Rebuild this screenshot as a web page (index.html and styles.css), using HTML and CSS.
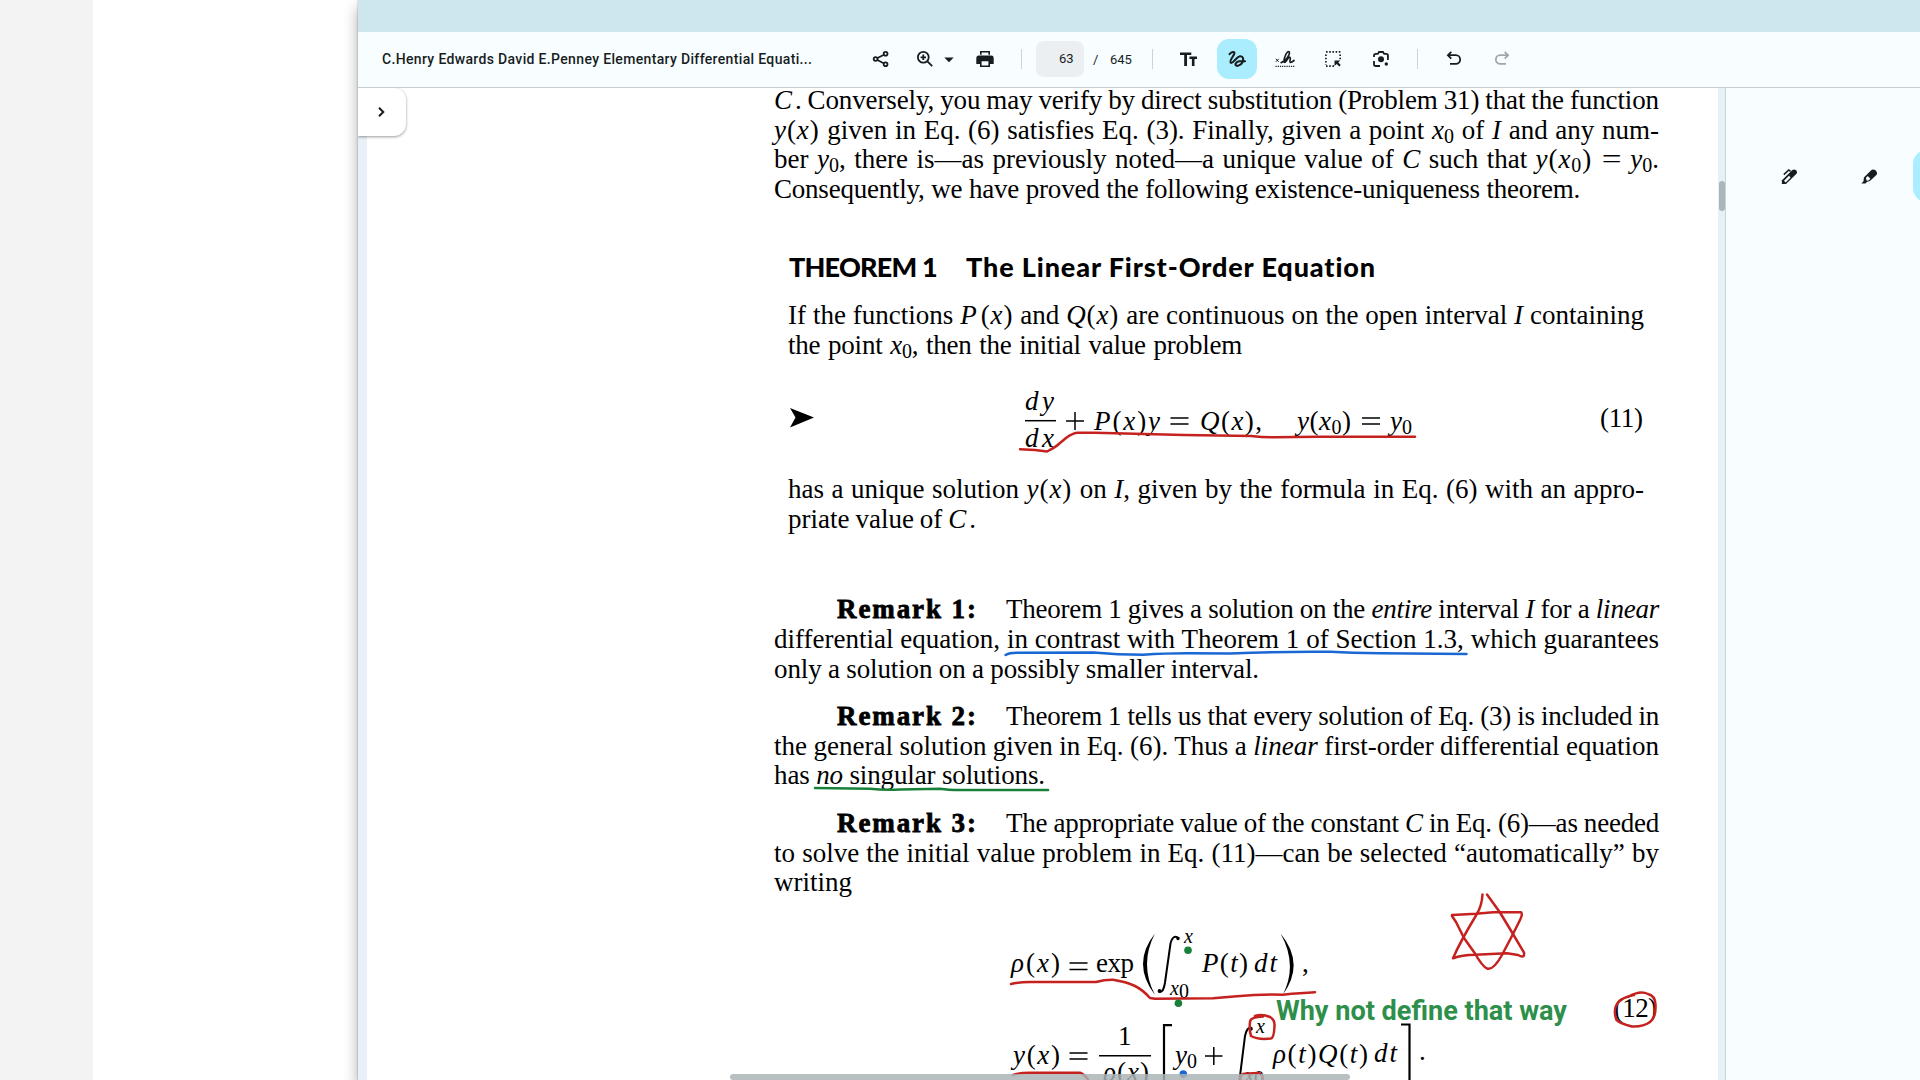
FILE: index.html
```html
<!DOCTYPE html>
<html lang="en">
<head>
<meta charset="utf-8">
<title>PDF viewer</title>
<link rel="stylesheet" href="styles.css">
</head>
<body>
<div class="desk"><div class="sheet"></div></div>
<main class="window">
  <div class="titlebar"></div>
  <header class="toolbar">
    <span class="doc-title">C.Henry Edwards David E.Penney Elementary Differential Equati...</span>
    <svg class="icon share" viewBox="0 0 20 20"><g class="stroke"><path d="M4.5 10 14.5 5M4.5 10l10 5.200"/><circle class="hollow" cx="4.600" cy="10" r="1.900"/><circle class="hollow" cx="14.600" cy="4.700" r="1.900"/><circle class="hollow" cx="14.600" cy="15.200" r="1.900"/></g></svg>
    <svg class="icon zoom" viewBox="0 0 20 20"><g class="stroke"><circle cx="8.300" cy="8.300" r="5.400"/><path d="m12.400 12.400 4.800 4.800M8.300 5.600v5.400M5.600 8.300H11"/></g></svg>
    <svg class="caret" viewBox="0 0 10 6"><path d="M.3.5h9.400L5 5.300z"/></svg>
    <svg class="icon print" viewBox="0 0 20 20"><path d="M5 2h10v3.800H5zM1.300 9a2.500 2.500 0 0 1 2.500-2.400h12.400A2.500 2.500 0 0 1 18.700 9v6H15v3H5v-3H1.300z"/><path class="paper" d="M6.600 3.500h6.800v2.600H6.600zM6.600 12.300h6.800v4.200H6.600z"/></svg>
    <i class="divider d1"></i>
    <span class="page-box">63</span>
    <span class="slash">/</span>
    <span class="total">645</span>
    <i class="divider d2"></i>
    <svg class="icon text-tool" viewBox="0 0 20 20"><path d="M1 3.400h11.300v2.700H8V17H5.200V6.100H1zM10.500 7.600H18v2.500h-2.500V17h-2.600v-6.900h-2.400z"/></svg>
    <span class="active-tool"><svg class="icon" viewBox="0 0 20 20"><path class="ink-icon" d="M2.500 5.200C4.500 2.800 8.500 1.800 7.200 5 6 7.900 2 12 3.800 13.800 5.500 15.300 9.500 7.700 13 7.200c3.300-.4 3.900 3.500 2.500 6-1.300 2.400-4.700 4.500-6.400 3.300-1.600-1.300.3-3.700 3-4.200 2.300-.4 4.300.1 5.900 0"/></svg></span>
    <svg class="icon sign" viewBox="0 0 20 20"><path class="thin" d="m.8 9.800 3 3m0-3-3 3"/><path class="ink-icon slim" d="M6.200 13.600C10.500 12.500 15.500 5 14.200 2.900 12 .9 8.200 10.400 9.200 13c1.300 1.700 3.700-5 5.600-4.800 1.700.6-.9 4.400.5 5.200 1.100.3 2.200-.6 3.700-1.900"/><path class="dots" d="M.5 17.300h19"/></svg>
    <svg class="icon select" viewBox="0 0 20 20"><path class="dash" d="M3 2.900h14.500M3 17.200h8M2.900 5.500v10M17.100 5.500v5"/><path d="M11.500 11.500h5.700l-1.900 1.900 2.500 2.600-1.500 1.500-2.600-2.500-2.200 1.900z"/></svg>
    <svg class="icon lens" viewBox="0 0 20 20"><path class="stroke" d="M3 8V6.700q0-1.800 1.800-1.800h2L8 3h4l1.200 1.900h2q1.800 0 1.800 1.800V8M3 12v3.200q0 1.800 1.800 1.800H9M16.900 7v4"/><circle cx="10" cy="10.300" r="3"/><circle cx="15.300" cy="15" r="1.700"/></svg>
    <i class="divider d3"></i>
    <svg class="icon undo" viewBox="0 0 20 20"><path class="stroke" d="M7.300 2.800 3.900 6.200l3.400 3.400M4.200 6.200h7.600a4.300 4.300 0 0 1 0 8.700H6"/></svg>
    <svg class="icon redo" viewBox="0 0 20 20"><path class="stroke" d="m12.700 2.800 3.400 3.400-3.400 3.400M15.800 6.200H8.200a4.300 4.300 0 0 0 0 8.700H14"/></svg>
  </header>
  <div class="workspace">
    <div class="viewer">
      <div class="gutter"></div>
      <article class="page">
        <div class="para p1">
          <p class="line snug"><i>C</i><span class="th"></span>. Conversely, you may verify by direct substitution (Problem 31) that the function</p>
          <p class="line"><span class="m"><i>y</i>(<i>x</i>)</span> given in Eq. (6) satisfies Eq. (3). Finally, given a point <i>x</i><sub>0</sub> of <i>I</i> and any num-</p>
          <p class="line">ber <i>y</i><sub>0</sub>, there is—as previously noted—a unique value of <i>C</i> such that <span class="m"><i>y</i>(<i>x</i><sub>0</sub>)</span> <span class="eq">=</span> <i>y</i><sub>0</sub>.</p>
          <p class="line tight w806">Consequently, we have proved the following existence-uniqueness theorem.</p>
        </div>
        <div class="theorem">
          <h2><span class="th-no">THEOREM 1</span><span class="th-name">The Linear First-Order Equation</span></h2>
          <p class="line">If the functions <span class="m"><i>P</i><span class="th"></span>(<i>x</i>)</span> and <span class="m"><i>Q</i>(<i>x</i>)</span> are continuous on the open interval <i>I</i> containing</p>
          <p class="line tight w453">the point <i>x</i><sub>0</sub>, then the initial value problem</p>
          <svg class="equation eq11" viewBox="789 370 860 100">
            <path d="M790 408l24 9.500-24 10 5.500-10z"/>
            <g class="math">
              <text x="1025" y="410" textLength="29">dy</text>
              <path class="rule" d="M1025 420.700h31"/>
              <text x="1025" y="447" textLength="29">dx</text>
              <path class="rule" d="M1066 421h18m-9-9v18M1170.500 418h18m-18 6h18M1362 418h18m-18 6h18"/>
              <text x="1094" y="430" textLength="66">P<tspan class="up">(</tspan>x<tspan class="up">)</tspan>y</text>
              <text x="1200" y="430" textLength="62">Q<tspan class="up">(</tspan>x<tspan class="up">),</tspan></text>
              <text x="1297" y="430" textLength="54">y<tspan class="up">(</tspan>x<tspan class="up low" dy="4">0</tspan><tspan class="up" dy="-4">)</tspan></text>
              <text x="1390" y="430">y<tspan class="up low" dy="4">0</tspan></text>
              <text class="up" x="1600" y="427" textLength="43">(11)</text>
            </g>
          </svg>
          <p class="line">has a unique solution <span class="m"><i>y</i>(<i>x</i>)</span> on <i>I</i>, given by the formula in Eq. (6) with an appro-</p>
          <p class="line w188">priate value of <i>C</i><span class="th"></span>.</p>
        </div>
        <div class="para remark r1">
          <div class="lead"><b>Remark 1:</b><p class="line tight">Theorem 1 gives a solution on the <i>entire</i> interval <i>I</i> for a <i>linear</i></p></div>
          <p class="line">differential equation, in contrast with Theorem 1 of Section 1.3, which guarantees</p>
          <p class="line snug w484">only a solution on a possibly smaller interval.</p>
        </div>
        <div class="para remark">
          <div class="lead"><b>Remark 2:</b><p class="line tight">Theorem 1 tells us that every solution of Eq. (3) is included in</p></div>
          <p class="line">the general solution given in Eq. (6). Thus a <i>linear</i> first-order differential equation</p>
          <p class="line snug w270">has <i>no</i> singular solutions.</p>
        </div>
        <div class="para remark">
          <div class="lead"><b>Remark 3:</b><p class="line tight">The appropriate value of the constant <i>C</i> in Eq. (6)—as needed</p></div>
          <p class="line">to solve the initial value problem in Eq. (11)—can be selected “automatically” by</p>
          <p class="line w76">writing</p>
        </div>
        <svg class="equation eq12" viewBox="774 900 900 180">
          <g class="math">
            <text x="1011" y="972" textLength="49">ρ<tspan class="up">(</tspan>x<tspan class="up">)</tspan></text>
            <path class="rule" d="M1069.500 963h18m-18 6.500h18M1069.500 1053h18m-18 6h18M1099 1055.800h52M1205 1056h17.500m-8.700-9v18"/>
            <text class="up" x="1096" y="972" textLength="38">exp</text>
            <path d="M1155 933.500q-24 30 0 61.500-16-31 0-61.500M1280.500 933.500q25 30 2.500 61 15-30-2.500-61"/>
            <path class="curve" d="M1179 938.500q-6-5-8.500 5l-5.500 39q-2 12-6.500 8.500"/>
            <circle cx="1178" cy="938.500" r="1.700"/><circle cx="1159.500" cy="991" r="1.900"/>
            <text class="small" x="1184" y="942.500">x</text>
            <text class="small" x="1170" y="995" textLength="19">x<tspan class="up low" dy="3">0</tspan></text>
            <text x="1202" y="972" textLength="46">P<tspan class="up">(</tspan>t<tspan class="up">)</tspan></text>
            <text x="1254" y="972" textLength="23">dt</text>
            <text class="up" x="1302" y="972">,</text>
            <text class="up" x="1614" y="1017" textLength="43">(12)</text>
            <text x="1013" y="1064" textLength="47">y<tspan class="up">(</tspan>x<tspan class="up">)</tspan></text>
            <text class="up" x="1118" y="1044.500">1</text>
            <text x="1103" y="1081" textLength="46">ρ<tspan class="up">(</tspan>x<tspan class="up">)</tspan></text>
            <path class="bracket" d="M1172 1025.200h-8V1085M1401 1024.500h8.500V1085"/>
            <text x="1175" y="1064">y<tspan class="up low" dy="4">0</tspan></text>
            <path class="curve" d="M1252 1028q-5-2-7 8l-6 48"/><circle cx="1251" cy="1029" r="1.800"/>
            <text class="small" x="1256" y="1033">x</text>
            <text class="small" x="1245" y="1082">x<tspan class="up low" dy="3">0</tspan></text>
            <text x="1273" y="1063" textLength="95">ρ<tspan class="up">(</tspan>t<tspan class="up">)</tspan>Q<tspan class="up">(</tspan>t<tspan class="up">)</tspan></text>
            <text x="1374" y="1062" textLength="23">dt</text>
            <text class="up" x="1419" y="1060">.</text>
          </g>
        </svg>
      </article>
      <div class="vscroll"><i></i></div>
      <button class="expand" aria-label="Expand"><svg viewBox="0 0 10 12"><path d="m2 1.700 4.300 4.300L2 10.300"/></svg></button>
    </div>
    <aside class="panel">
      <svg class="pen" viewBox="0 0 17 17"><path d="M1 12.200 9.800 3.400 11.300 2C14 .3 17.300 3 15.500 5.800L5 16H.8z"/><path class="barrel" d="m3 12.800 5-5 1.600 1.600-5 5z"/><path class="clip" d="M2.800 6.600 7.800 2l1.800 1.300"/></svg>
      <svg class="pen marker" viewBox="0 0 17 17"><path d="M10.200 2.200c2.300-2.200 7.300 1.200 5.400 4.500l-6.400 6-3.400 1.200-1.200 1.500H.3l2.200-2.200.4-3.600z"/><path class="barrel" d="m4.800 10 2-1.900 2.600 2.700-1.900 1.700-1.700.3z"/></svg>
      <span class="active-pen"></span>
    </aside>
  </div>
  <svg class="ink" viewBox="0 0 1920 1080">
    <g class="red">
      <path d="M1020 449.300 1035 450 1047 451.500Q1056 447 1060 443L1066 438Q1073 432.700 1078 432.700L1095 432.700 1184 435 1251 436Q1263 437.500 1275 437.300L1318 436.700H1415"/>
      <path d="M1011 984q8-2 19-2h66q9-2.500 17-2.300 13 2 22 6.300 8 4 15 12l5 .8 58-.5 24-2q22-2.300 46-1.600 18-1.700 32-2.400"/>
      <path d="M1482.500 894.500Q1482 906 1476 915.500 1460 942 1453 958.300 1462 954.700 1475 954.700L1507 953.300 1518 955Q1525 959 1524 952.700L1513 934 1500 912.500 1487 894.500"/>
      <path d="M1452 915 1476 913.700 1493 912.300H1521Q1523 914 1520 920L1513 934 1502 955Q1493 971 1487 968.500 1482 966 1475 953.500L1464 938 1456 922 1452 916"/>
      <path d="M1628 997Q1640 990 1648 994 1656 996 1655.500 1006 1656 1017 1650 1022 1643 1027 1632 1026.500 1619 1023 1616.500 1020 1613 1010 1617 1004 1622 997 1634 995"/>
      <path d="M1255 1016Q1262 1013.500 1270 1017 1275 1020 1274.500 1026 1274 1038 1271 1038.500 1258 1040 1251 1036 1249 1030 1250 1022 1250 1017 1263 1016.500"/>
      <path d="M1013 1075q7-2.300 17-2.300h50q5 2 8 7M1240.500 1080q0-6 4-6.300l14-.7q4 1 4.500 6"/>
    </g>
    <path class="blue" d="M1005.500 655q4-2.200 11-2.200l77-.3q24 2.300 50 2.300 20-1.500 44-1.500l43 .2q50-2.200 100-1.700 20 1.200 50 1.500l86 .6"/>
    <path class="green" d="M815 788l55 .7q15 1.600 30 .7l40-.7q8 1.300 20 1.300h88"/>
    <g class="green-dot"><circle cx="1188" cy="950.300" r="3.800"/><circle cx="1178.400" cy="1003.300" r="3.800"/></g>
    <circle class="blue-dot" cx="1183.300" cy="1074" r="3.800"/>
    <text class="note" x="1276" y="1019.500" textLength="291" lengthAdjust="spacingAndGlyphs">Why not define that way</text>
  </svg>
  <div class="hscroll"></div>
</main>
</body>
</html>
```
FILE: styles.css
```css
* { box-sizing: border-box; }
body { margin: 0; width: 1920px; height: 1080px; overflow: hidden; display: flex; background: #fff; color: #000; }
p, h2 { margin: 0; }
.desk { width: 358px; flex: none; background: #f3f3f3; padding-left: 93px; }
.sheet { height: 100%; background: #fff; }
.window { flex: 1; min-width: 0; display: flex; flex-direction: column; background: #f8fdff; box-shadow: 0 8px 14px rgba(0,0,0,.32), 0 0 2px rgba(0,0,0,.3); }
.titlebar { height: 32px; background: #cee7ee; flex: none; }
.toolbar { height: 56px; flex: none; border-bottom: 1px solid #c3ced1; display: flex; align-items: center; padding: 0 0 1px 24px; font-family: Roboto, sans-serif; font-size: 14px; color: #171d1e; }
.doc-title { width: 431px; font-weight: 500; letter-spacing: .34px; white-space: nowrap; }
.icon { width: 20px; height: 20px; flex: none; fill: #171d1e; }
.stroke { fill: none; stroke: #171d1e; stroke-width: 1.8; }
.hollow { fill: #f8fdff; }
.paper { fill: #f8fdff; }
.share { margin-left: 58px; }
.zoom { margin-left: 24px; }
.caret { width: 10px; height: 6px; margin: 1px 0 0 9px; fill: #171d1e; flex: none; }
.print { margin-left: 21px; }
.divider { width: 1px; height: 20px; background: #cbd4d7; flex: none; }
.d1 { margin-left: 26px; }
.page-box { width: 48px; height: 36px; margin-left: 14px; border-radius: 8px; background: #ebeff1; line-height: 36px; padding-left: 23px; font-size: 13px; flex: none; }
.slash { width: 17px; margin-left: 9px; font-size: 13px; flex: none; }
.total { width: 23px; font-size: 13px; flex: none; }
.d2 { margin-left: 19px; }
.text-tool { margin-left: 26px; }
.active-tool { width: 40px; height: 40px; margin-left: 18px; border-radius: 12px; background: #aaedff; display: grid; place-items: center; flex: none; }
.ink-icon { fill: none; stroke: #171d1e; stroke-width: 2; stroke-linecap: round; }
.slim { stroke-width: 1.7; }
.thin { stroke: #171d1e; stroke-width: 1; }
.dots { stroke: #171d1e; stroke-width: 1.2; stroke-dasharray: 1.2 1; }
.sign { margin-left: 18px; }
.dash { fill: none; stroke: #171d1e; stroke-width: 1.7; stroke-dasharray: 1.6 1.6; }
.select { margin-left: 28px; }
.lens { margin-left: 28px; }
.d3 { margin-left: 26px; }
.undo { margin-left: 26px; }
.redo { margin-left: 28px; opacity: .38; }
.workspace { flex: 1; min-height: 0; display: flex; }
.viewer { width: 1367px; position: relative; display: flex; background: #fff; overflow: hidden; }
.gutter { width: 9px; background: #e8f1f8; flex: none; }
.page { width: 1351px; padding-left: 407px; flex: none; font-family: "Liberation Serif", serif; font-size: 27px; }
.vscroll { width: 7px; background: #e6f1f7; padding: 93px 0 0 1px; flex: none; }
.vscroll i { display: block; width: 6px; height: 30px; border-radius: 3px; background: #abb6b8; }
.expand { position: absolute; left: 0; top: 0; width: 48px; height: 48px; border: 0; border-radius: 0 12px 12px 0; background: #fff; box-shadow: 0 1px 3px rgba(0,0,0,.4); display: grid; place-items: center; }
.expand svg { width: 10px; height: 12px; fill: none; stroke: #171d1e; stroke-width: 2; }
.hscroll { position: absolute; left: 730px; bottom: 0; width: 620px; height: 6px; border-radius: 3px; background: rgba(171,180,182,.84); }
.line { width: 100%; height: 29.6px; line-height: 29.6px; text-align: justify; text-align-last: justify; white-space: nowrap; word-spacing: -3px; }
.line sub { font-size: 20px; line-height: 0; vertical-align: -4px; }
.tight { letter-spacing: -.22px; }
.snug { letter-spacing: -.12px; }
.m { letter-spacing: .9px; }
.eq { display: inline-block; line-height: 20px; transform: scaleX(1.3); margin: 0 3px; }
.th { display: inline-block; width: 3px; }
.w806 { width: 806px; }
.w453 { width: 454px; }
.w188 { width: 188px; }
.w484 { width: 485px; }
.w270 { width: 271px; }
.w76 { width: 77px; }
.para { width: 885px; }
.p1 { margin-top: -2px; height: 121px; }
.theorem { width: 856px; margin-left: 14px; padding-top: 41px; }
.theorem h2 { height: 53px; display: flex; font: 900 27px/38px Lato, sans-serif; white-space: nowrap; }
.th-no { width: 178px; padding-left: 1px; letter-spacing: -.8px; }
.th-name { letter-spacing: .88px; }
.equation { display: block; overflow: visible; }
.eq11 { width: 860px; height: 100px; margin: 10px 0 5px 1px; }
.remark { margin-bottom: 18px; }
.r1 { margin-top: 61px; }
.remark:last-of-type { margin-bottom: 2px; }
.lead { display: flex; }
.lead b { width: 232px; padding-left: 63px; line-height: 29.6px; letter-spacing: 1.9px; -webkit-text-stroke: .8px #000; flex: none; white-space: nowrap; }
.lead .line { flex: 1; width: auto; }
.eq12 { width: 900px; height: 180px; }
.math { font-family: "Liberation Serif", serif; font-size: 27px; font-style: italic; }
.up { font-style: normal; }
.low { font-size: 20px; }
.small { font-size: 20px; }
.rule { stroke: #000; stroke-width: 1.5; fill: none; }
.curve { stroke: #000; stroke-width: 2; fill: none; }
.bracket { stroke: #000; stroke-width: 2.2; fill: none; }
.panel { flex: 1; border-left: 1px solid #c9d4d7; display: flex; padding: 62px 0 0 55px; background: #f8fdff; overflow: hidden; }
.pen { width: 17px; height: 17px; margin-top: 18px; fill: #171d1e; flex: none; }
.barrel { fill: #f8fdff; }
.clip { fill: none; stroke: #171d1e; stroke-width: 1.5; }
.marker { margin-left: 63px; }
.active-pen { width: 52px; height: 52px; margin-left: 35px; border-radius: 14px; background: #aaedff; flex: none; }
.ink { position: absolute; left: 0; top: 0; width: 1920px; height: 1080px; pointer-events: none; fill: none; stroke-width: 2.5; stroke-linecap: round; stroke-linejoin: round; }
.red { stroke: #c5221f; }
.blue { stroke: #1967d2; }
.green { stroke: #188038; }
.green-dot { fill: #188038; }
.blue-dot { fill: #1967d2; }
.note { font: 700 27px Roboto, sans-serif; fill: #2d8f4a; }
```
